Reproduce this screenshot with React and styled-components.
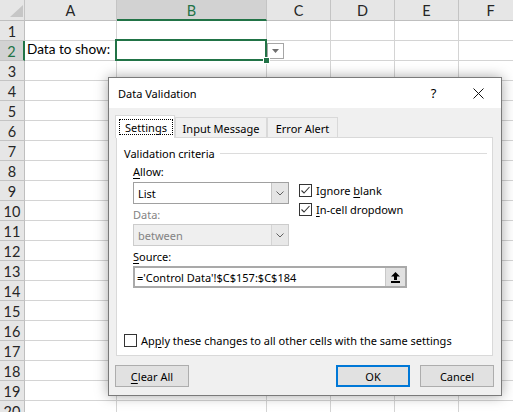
import React from "react";
import styled, { createGlobalStyle } from "styled-components";

const GlobalStyle = createGlobalStyle`
  html, body {
    margin: 0;
    padding: 0;
    background: #fff;
  }
  body {
    font-family: "Lato", "Liberation Sans", sans-serif;
  }
`;

const COLS = ["A", "B", "C", "D", "E", "F"];
const ROW_COUNT = 20;
const GREEN = "#217346";

function App() {
  return (
    <>
      <GlobalStyle />
      <Page>
        <Sheet>
          <Corner />
          {COLS.map((c) => (
            <ColHead key={c} $sel={c === "B"}>
              {c}
            </ColHead>
          ))}
          {Array.from({ length: ROW_COUNT }, (_, i) => {
            const r = i + 1;
            return (
              <React.Fragment key={r}>
                <RowHead $sel={r === 2}>{r}</RowHead>
                {COLS.map((c) => {
                  if (r === 2 && c === "A") return <Cell key={c}>Data to show:</Cell>;
                  if (r === 2 && c === "B") return <ActiveCell key={c} />;
                  if (r === 2 && c === "C")
                    return (
                      <Cell key={c}>
                        <ListArrow>
                          <svg width="7" height="4" viewBox="0 0 7 4">
                            <path d="M0 0H7L3.5 4Z" fill="#6f6f6f" />
                          </svg>
                        </ListArrow>
                      </Cell>
                    );
                  return <Cell key={c} />;
                })}
              </React.Fragment>
            );
          })}
        </Sheet>

        <Dialog>
          <TitleBar>
            <Title>Data Validation</Title>
            <CaptionButton>?</CaptionButton>
            <CaptionButton>
              <svg width="11" height="11" viewBox="0 0 11 11">
                <path d="M0.5 0.5L10.5 10.5M10.5 0.5L0.5 10.5" stroke="#111" strokeWidth="1" />
              </svg>
            </CaptionButton>
          </TitleBar>

          <Body>
            <TabStrip>
              <Tab $active $w={60}>
                <FocusRing>Settings</FocusRing>
              </Tab>
              <Tab $w={92}>Input Message</Tab>
              <Tab $w={71}>Error Alert</Tab>
            </TabStrip>

            <Panel>
              <GroupHeader>
                <span>Validation criteria</span>
                <Rule />
              </GroupHeader>
              <Group>
                <FieldLabel>
                  <Key>A</Key>llow:
                </FieldLabel>
                <AllowRow>
                  <LeftCol>
                    <Combo>
                      <ComboText>List</ComboText>
                      <ComboButton>
                        <Chevron />
                      </ComboButton>
                    </Combo>
                    <FieldLabel $disabled>Data:</FieldLabel>
                    <Combo $disabled>
                      <ComboText>between</ComboText>
                      <ComboButton $disabled>
                        <Chevron />
                      </ComboButton>
                    </Combo>
                  </LeftCol>
                  <CheckCol>
                    <CheckRow>
                      <CheckBox checked />
                      <span>
                        Ignore <Key>b</Key>lank
                      </span>
                    </CheckRow>
                    <CheckRow>
                      <CheckBox checked />
                      <span>
                        <Key>I</Key>n-cell dropdown
                      </span>
                    </CheckRow>
                  </CheckCol>
                </AllowRow>
                <FieldLabel>
                  <Key>S</Key>ource:
                </FieldLabel>
                <SourceBox>
                  <SourceText>='Control Data'!$C$157:$C$184</SourceText>
                  <RefButton>
                    <svg width="9" height="11" viewBox="0 0 9 11">
                      <path d="M4.5 0L9 4.5H6V8H3V4.5H0Z" fill="#000" />
                      <rect x="0" y="9" width="9" height="2" fill="#000" />
                    </svg>
                  </RefButton>
                </SourceBox>
              </Group>
              <ApplyRow>
                <CheckBox />
                <span>
                  Ap<Key>p</Key>ly these changes to all other cells with the same settings
                </span>
              </ApplyRow>
            </Panel>

            <Footer>
              <Button>
                <Key>C</Key>lear All
              </Button>
              <Spacer />
              <Button $default>OK</Button>
              <Button>Cancel</Button>
            </Footer>
          </Body>
        </Dialog>
      </Page>
    </>
  );
}

function Chevron() {
  return (
    <svg width="8" height="5" viewBox="0 0 8 5">
      <path d="M0.5 0.5L4 4L7.5 0.5" fill="none" stroke="#606060" strokeWidth="1" />
    </svg>
  );
}

function CheckBox({ checked }) {
  return (
    <Box>
      {checked && (
        <svg width="11" height="11" viewBox="0 0 11 11">
          <path d="M1.5 5.5L4 8L9.5 2" fill="none" stroke="#333" strokeWidth="1.1" />
        </svg>
      )}
    </Box>
  );
}

export default App;

/* ---------- sheet ---------- */

const Page = styled.div`
  position: relative;
  width: 513px;
  height: 412px;
  overflow: hidden;
`;

const Sheet = styled.div`
  display: grid;
  grid-template-columns: 25px 92px 150px 64px 64px 64px 64px;
  grid-template-rows: 21px;
  grid-auto-rows: 20px;
  font-family: "Lato", "Liberation Sans", sans-serif;
  font-size: 14.5px;
  color: #000;
`;

const Corner = styled.div`
  position: relative;
  box-sizing: border-box;
  background: #e6e6e6;
  border-right: 1px solid #c4c4c4;
  border-bottom: 1px solid #bfbfbf;

  &::after {
    content: "";
    position: absolute;
    right: 1px;
    bottom: 3px;
    width: 13px;
    height: 12px;
    background: #c6c6c6;
    clip-path: polygon(100% 0, 100% 100%, 0 100%);
  }
`;

const ColHead = styled.div`
  box-sizing: border-box;
  display: flex;
  align-items: center;
  justify-content: center;
  padding-top: 1px;
  background: ${(p) => (p.$sel ? "#d2d2d2" : "#e6e6e6")};
  color: ${(p) => (p.$sel ? GREEN : "#262626")};
  border-right: 1px solid #c4c4c4;
  border-bottom: ${(p) => (p.$sel ? `2px solid ${GREEN}` : "1px solid #bfbfbf")};
`;

const RowHead = styled.div`
  box-sizing: border-box;
  display: flex;
  align-items: center;
  justify-content: center;
  padding-top: 2px;
  background: ${(p) => (p.$sel ? "#d2d2d2" : "#e6e6e6")};
  color: ${(p) => (p.$sel ? GREEN : "#262626")};
  border-right: ${(p) => (p.$sel ? `2px solid ${GREEN}` : "1px solid #bfbfbf")};
  border-bottom: 1px solid #c4c4c4;
`;

const Cell = styled.div`
  position: relative;
  box-sizing: border-box;
  display: flex;
  align-items: flex-end;
  padding: 0 2px 2px;
  white-space: nowrap;
  font-size: 13.6px;
  line-height: 17px;
  border-right: 1px solid #d4d4d4;
  border-bottom: 1px solid #d4d4d4;
`;

const ActiveCell = styled(Cell)`
  z-index: 2;

  &::before {
    content: "";
    position: absolute;
    top: -2px;
    left: -2px;
    right: -1px;
    bottom: -1px;
    border: 2px solid ${GREEN};
  }

  &::after {
    content: "";
    position: absolute;
    right: -4px;
    bottom: -4px;
    width: 5px;
    height: 5px;
    background: ${GREEN};
    border: 1px solid #fff;
  }
`;

const ListArrow = styled.div`
  box-sizing: border-box;
  align-self: flex-start;
  width: 17px;
  height: 16px;
  margin: 2px 0 0 -2px;
  display: flex;
  align-items: center;
  justify-content: center;
  background: #fff;
  border: 1px solid #a6a6a6;
`;

/* ---------- dialog ---------- */

const Dialog = styled.div`
  position: absolute;
  left: 108px;
  top: 77px;
  width: 394px;
  height: 319px;
  box-sizing: border-box;
  display: flex;
  flex-direction: column;
  background: #f0f0f0;
  border: 1px solid #7a7a7a;
  box-shadow: 0 0 12px rgba(0, 0, 0, 0.35);
  font-family: "Noto Sans", "Open Sans", sans-serif;
  font-size: 11px;
  color: #000;
  z-index: 5;
`;

const TitleBar = styled.div`
  height: 30px;
  display: flex;
  align-items: center;
  background: #fff;
  padding-left: 9px;
`;

const Title = styled.div`
  flex: 1;
`;

const CaptionButton = styled.div`
  width: 45px;
  height: 30px;
  display: flex;
  align-items: center;
  justify-content: center;
  font-size: 13px;
`;

const Body = styled.div`
  flex: 1;
  display: flex;
  flex-direction: column;
  padding: 0 8px 0 7px;
`;

const TabStrip = styled.div`
  height: 30px;
  display: flex;
  align-items: flex-end;
  margin: 0 0 -1px -1px;
  position: relative;
  z-index: 1;
`;

const Tab = styled.div`
  box-sizing: border-box;
  width: ${(p) => p.$w}px;
  height: ${(p) => (p.$active ? "23px" : "20px")};
  margin-bottom: ${(p) => (p.$active ? "0" : "1px")};
  display: flex;
  align-items: center;
  justify-content: center;
  background: ${(p) => (p.$active ? "#fff" : "#f0f0f0")};
  border: 1px solid #d9d9d9;
  border-bottom: none;
  padding-top: ${(p) => (p.$active ? "0" : "1px")};
`;

const FocusRing = styled.div`
  flex: 1;
  align-self: stretch;
  display: flex;
  align-items: center;
  justify-content: center;
  margin: 3px 1px 3px 3px;
  border: 1px dotted #000;
`;

const Panel = styled.div`
  box-sizing: border-box;
  height: 219px;
  display: flex;
  flex-direction: column;
  background: #fff;
  border: 1px solid #d9d9d9;
`;

const GroupHeader = styled.div`
  display: flex;
  align-items: center;
  height: 16px;
  margin-top: 7px;
  padding-left: 7px;
`;

const Rule = styled.div`
  flex: 1;
  height: 1px;
  margin: 0 5px 0 5px;
  background: #dcdcdc;
`;

const Group = styled.div`
  display: flex;
  flex-direction: column;
  padding-left: 16px;
`;

const FieldLabel = styled.div`
  height: 17px;
  line-height: 17px;
  margin: 2px 0 1px;
  color: ${(p) => (p.$disabled ? "#838383" : "#000")};
`;

const Key = styled.span`
  text-decoration: underline;
  text-underline-offset: 2px;
`;

const AllowRow = styled.div`
  display: flex;
  align-items: flex-start;
  margin-top: 1px;
`;

const LeftCol = styled.div`
  display: flex;
  flex-direction: column;
  width: 156px;
`;

const Combo = styled.div`
  box-sizing: border-box;
  height: 22px;
  display: flex;
  background: ${(p) => (p.$disabled ? "#efefef" : "#fff")};
  border: 1px solid ${(p) => (p.$disabled ? "#cccccc" : "#a0a0a0")};
  color: ${(p) => (p.$disabled ? "#838383" : "#000")};
`;

const ComboText = styled.div`
  flex: 1;
  display: flex;
  align-items: center;
  padding-left: 4px;
`;

const ComboButton = styled.div`
  width: 16px;
  display: flex;
  align-items: center;
  justify-content: center;
  background: ${(p) => (p.$disabled ? "#e8e8e8" : "#e5e5e5")};
  border-left: 1px solid ${(p) => (p.$disabled ? "#d4d4d4" : "#c4c4c4")};
`;

const CheckCol = styled.div`
  display: flex;
  flex-direction: column;
  gap: 2px;
  margin-left: 10px;
`;

const CheckRow = styled.div`
  display: flex;
  align-items: center;
  gap: 4px;
  height: 17px;
`;

const Box = styled.div`
  box-sizing: border-box;
  width: 13px;
  height: 13px;
  display: flex;
  align-items: center;
  justify-content: center;
  background: #fff;
  border: 1px solid #333;
`;

const SourceBox = styled.div`
  box-sizing: border-box;
  width: 274px;
  height: 22px;
  display: flex;
  background: #fff;
  border: 2px solid #a9a9a9;
`;

const SourceText = styled.div`
  flex: 1;
  display: flex;
  align-items: center;
  padding-left: 2px;
`;

const RefButton = styled.div`
  width: 19px;
  display: flex;
  align-items: center;
  justify-content: center;
  background: #e1e1e1;
  border-left: 1px solid #c8c8c8;
`;

const ApplyRow = styled(CheckRow)`
  margin-top: auto;
  margin-bottom: 6px;
  padding-left: 7px;
`;

const Footer = styled.div`
  display: flex;
  gap: 10px;
  margin: 9px -1px 0 -1px;
`;

const Spacer = styled.div`
  flex: 1;
`;

const Button = styled.div`
  box-sizing: border-box;
  width: 74px;
  height: 22px;
  display: flex;
  align-items: center;
  justify-content: center;
  background: #e1e1e1;
  border: ${(p) => (p.$default ? "2px solid #0078d7" : "1px solid #adadad")};
`;
